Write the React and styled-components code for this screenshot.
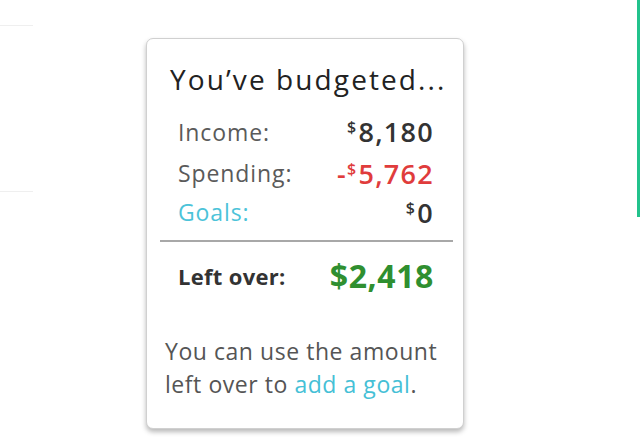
import React from "react";
import styled, { createGlobalStyle } from "styled-components";

const Global = createGlobalStyle`
  html, body { margin: 0; padding: 0; background: #fff; }
  body { font-family: "Open Sans", Lato, sans-serif; }
`;

const Page = styled.div`
  display: flex;
  align-items: flex-start;
  width: 640px;
  height: 447px;
  overflow: hidden;
  background: #fff;
`;

const SidePanel = styled.div`
  width: 33px;
  height: 165px;
  margin-top: 25px;
  border-top: 1px solid #efefef;
  border-bottom: 1px solid #efefef;
`;

const Card = styled.div`
  box-sizing: border-box;
  width: 318px;
  height: 391px;
  margin: 38px 0 0 113px;
  padding: 21px 29px 0 14px;
  background: #fff;
  border: 1px solid #d0d0d0;
  border-radius: 7px;
  box-shadow: 0 3px 5px rgba(0, 0, 0, 0.28);
  color: #444;
`;

const Title = styled.h2`
  margin: 0 0 0 9px;
  font-size: 28px;
  font-weight: 400;
  color: #222;
  line-height: 38px;
  letter-spacing: 2.1px;
  white-space: nowrap;
`;

const Rows = styled.div`
  display: flex;
  flex-direction: column;
  margin: 12px 0 0 17px;
`;

const Row = styled.div`
  display: flex;
  justify-content: space-between;
  align-items: center;
  height: ${(p) => p.$h || 40}px;
`;

const Label = styled.span`
  font-size: 23px;
  font-weight: 400;
  letter-spacing: 0.9px;
  color: ${(p) => p.$color || "#5a5a5a"};
`;

const Value = styled.span`
  font-size: 27px;
  font-weight: 600;
  letter-spacing: 1.3px;
  color: ${(p) => p.$color || "#333"};
`;

const Sup = styled.sup`
  font-size: 16px;
  vertical-align: 9px;
  margin-right: 1px;
`;

const Divider = styled.hr`
  margin: 9px -19px 0 -1px;
  border: none;
  border-top: 2px solid #a8a8a8;
  height: 0;
`;

const TotalRow = styled.div`
  display: flex;
  justify-content: space-between;
  align-items: center;
  margin: 12px 0 0 17px;
`;

const TotalLabel = styled.span`
  font-size: 22px;
  font-weight: 700;
  color: #333;
  letter-spacing: 0.3px;
`;

const TotalValue = styled.span`
  font-size: 32px;
  font-weight: 700;
  color: #2f8f30;
  letter-spacing: 0.6px;
`;

const Note = styled.p`
  margin: 38px -16px 0 4px;
  font-size: 23px;
  font-weight: 400;
  line-height: 33px;
  color: #555;
  letter-spacing: 0.55px;
`;

const Link = styled.a`
  color: #45c0d6;
  text-decoration: none;
`;

const Spacer = styled.div`
  flex: 1;
`;

const EdgeBar = styled.div`
  width: 3px;
  height: 217px;
  background: #22c28c;
`;

export default function App() {
  return (
    <>
      <Global />
      <Page>
        <SidePanel />
        <Card>
          <Title>You’ve budgeted...</Title>
          <Rows>
            <Row $h={43}>
              <Label>Income:</Label>
              <Value><Sup>$</Sup>8,180</Value>
            </Row>
            <Row $h={40}>
              <Label>Spending:</Label>
              <Value $color="#e03c3c">-<Sup>$</Sup>5,762</Value>
            </Row>
            <Row $h={38}>
              <Label $color="#4cc3d9">Goals:</Label>
              <Value><Sup>$</Sup>0</Value>
            </Row>
          </Rows>
          <Divider />
          <TotalRow>
            <TotalLabel>Left over:</TotalLabel>
            <TotalValue>$2,418</TotalValue>
          </TotalRow>
          <Note>
            You can use the amount left over to <Link href="#">add a goal</Link>.
          </Note>
        </Card>
        <Spacer />
        <EdgeBar />
      </Page>
    </>
  );
}
